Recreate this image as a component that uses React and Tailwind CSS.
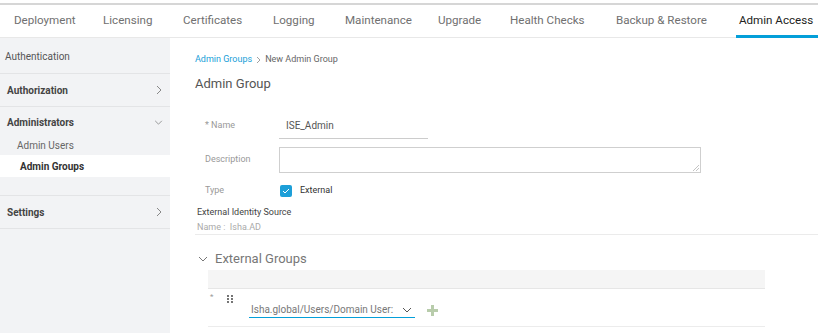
import React from "react";

const tabs = [
  ["Deployment", 89],
  ["Licensing", 80],
  ["Certificates", 90],
  ["Logging", 72],
  ["Maintenance", 93],
  ["Upgrade", 72],
  ["Health Checks", 106],
  ["Backup & Restore", 123],
  ["Admin Access", 79],
];

function ChevronRight() {
  return (
    <svg width="6" height="10" viewBox="0 0 6 10" fill="none" stroke="#888" strokeWidth="1">
      <path d="M1 1l4 4-4 4" />
    </svg>
  );
}
function ChevronDown({ color = "#888", w = 10, h = 6 }) {
  return (
    <svg width={w} height={h} viewBox="0 0 10 6" fill="none" stroke={color} strokeWidth="1">
      <path d="M1 1l4 4 4-4" />
    </svg>
  );
}

export default function App() {
  return (
    <div className="w-[818px] h-[333px] overflow-hidden bg-white text-[#444]" style={{ fontFamily: "Roboto, 'Liberation Sans', sans-serif" }}>
      <div className="h-[3px] bg-white" />
      <div className="h-[2px] bg-[#d6d6d6]" />
      <div className="flex h-[33px] border-b border-[#e8e8e8] pl-[14px]">
        {tabs.map(([t, w]) => (
          <div key={t} style={{ width: w }} className={"relative shrink-0 flex items-center whitespace-nowrap text-[11.6px] " + (t === "Admin Access" ? "text-[#222]" : "text-[#707070]")}>
            {t}
            {t === "Admin Access" && <div className="absolute left-[-3px] right-0 bottom-[-1px] h-[3px] bg-[#049fd9]" />}
          </div>
        ))}
      </div>
      <div className="flex h-[295px]">
        <div className="w-[170px] bg-[#f2f3f5] text-[10px] shrink-0">
          <div className="h-[36px] flex items-center pl-[5px] pt-[2px] text-[#555] border-b border-[#e3e4e6]">Authentication</div>
          <div className="h-[33px] flex items-center justify-between pl-[7px] pr-[8px] font-bold text-[#444] border-b border-[#e3e4e6]">
            <span>Authorization</span><ChevronRight />
          </div>
          <div className="h-[31px] flex items-center justify-between pl-[7px] pr-[7px] font-bold text-[#444]">
            <span>Administrators</span><ChevronDown w={9} h={5} />
          </div>
          <div className="h-[14px] flex items-center pl-[17px] text-[#666]">Admin Users</div>
          <div className="h-[22px] mt-[3px] flex items-center pl-[20px] font-bold text-[#333] bg-white">Admin Groups</div>
          <div className="h-[19px] border-b border-[#e3e4e6]" />
          <div className="h-[33px] flex items-center justify-between pl-[7px] pr-[8px] font-bold text-[#444] border-b border-[#e3e4e6]">
            <span>Settings</span><ChevronRight />
          </div>
        </div>
        <div className="flex-1 pl-[25px] pt-[16px]">
          <div className="flex items-center gap-[4px] text-[9px] h-[12px]">
            <span className="text-[#20a0d8]">Admin Groups</span>
            <svg width="5" height="8" viewBox="0 0 5 8" fill="none" stroke="#888" strokeWidth="0.8"><path d="M1 1l3 3-3 3" /></svg>
            <span className="text-[#666]">New Admin Group</span>
          </div>
          <div className="mt-[10px] text-[13px] text-[#555] h-[16px] leading-[16px]">Admin Group</div>
          <div className="mt-[25px] flex items-end h-[22px]">
            <div className="w-[84px] pl-[10px] text-[9px] text-[#999] pb-[7px]">* Name</div>
            <div className="w-[149px] h-[22px] border-b border-[#ccc] text-[10px] text-[#555] pl-[7px] pt-[1px]">ISE_Admin</div>
          </div>
          <div className="mt-[8px] flex items-center">
            <div className="w-[84px] pl-[10px] text-[9px] text-[#999]">Description</div>
            <div className="relative w-[422px] h-[26px] border border-[#cfcfcf]">
              <svg className="absolute right-[1px] bottom-[1px]" width="6" height="6" viewBox="0 0 6 6" stroke="#aaa" strokeWidth="0.7"><path d="M0 6L6 0M3 6L6 3" /></svg>
            </div>
          </div>
          <div className="mt-[11px] flex items-center h-[13px]">
            <div className="w-[85px] pl-[10px] text-[9px] text-[#999]">Type</div>
            <div className="w-[12px] h-[12px] rounded-[2px] bg-[#1d9fd8] flex items-center justify-center">
              <svg width="8" height="6" viewBox="0 0 8 6" fill="none" stroke="white" strokeWidth="1"><path d="M1 3l2 2 4-4" /></svg>
            </div>
            <span className="ml-[8px] text-[9px] text-[#333]">External</span>
          </div>
          <div className="mt-[9px] text-[9px] text-[#444] pl-[2px]">External Identity Source</div>
          <div className="mt-[1px] text-[9px] text-[#aaa] pl-[2px]">Name :&nbsp; Isha.AD</div>
          <div className="h-px bg-[#ebebeb]" />
          <div className="mt-[16px] flex items-center h-[16px] pl-[3px]">
            <ChevronDown color="#777" w={10} h={6} />
            <span className="ml-[7px] text-[13px] text-[#777]">External Groups</span>
          </div>
          <div className="ml-[13px] w-[557px] mt-[3px] h-[19px] bg-[#f5f5f5] border-b border-[#e6e6e6]" />
          <div className="ml-[13px] w-[557px] h-[38px] border-b border-[#ececec] relative">
            <span className="absolute left-[2px] top-[2px] text-[8px] text-[#999]">*</span>
            <svg className="absolute left-[19px] top-[6px]" width="6" height="10" viewBox="0 0 6 10" fill="#333">
              <circle cx="1" cy="1" r="0.9" /><circle cx="5" cy="1" r="0.9" />
              <circle cx="1" cy="4" r="0.9" /><circle cx="5" cy="4" r="0.9" />
              <circle cx="1" cy="7" r="0.9" /><circle cx="5" cy="7" r="0.9" />
            </svg>
            <div className="absolute left-[41px] top-[13px] w-[166px] h-[16px] border-b border-[#049fd9] flex items-center justify-between pl-[2px] pr-[3px]">
              <span className="text-[10px] text-[#777] whitespace-nowrap overflow-hidden w-[148px]">Isha.global/Users/Domain User:</span>
              <ChevronDown color="#555" w={10} h={6} />
            </div>
            <svg className="absolute left-[219px] top-[16px]" width="11" height="11" viewBox="0 0 11 11" fill="#b8ccab">
              <rect x="4" y="0" width="3" height="11" /><rect x="0" y="4" width="11" height="3" />
            </svg>
          </div>
        </div>
      </div>
    </div>
  );
}
